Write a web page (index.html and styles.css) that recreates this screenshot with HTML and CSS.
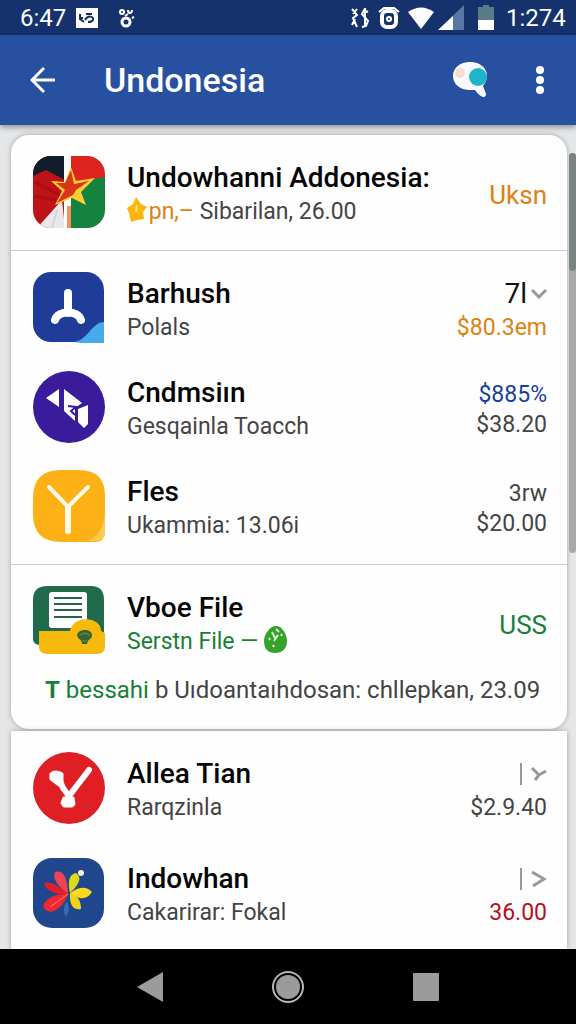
FILE: index.html
```html
<!DOCTYPE html>
<html lang="id">
  <head>
    <meta charset="UTF-8" />
    <meta name="viewport" content="width=device-width, initial-scale=1.0" />
    <title>Undonesia</title>
    <link rel="stylesheet" href="styles.css" />
  </head>
  <body>
    <div class="status-bar">
      <span class="clock">6:47</span>
      <svg width="22" height="20" viewBox="0 0 22 20">
        <path d="M0 0h22v20H0z" fill="#fff" />
        <path d="M4 6v5l4 3M4 10h3M10 6h6M9 12c3-5 9-4 8 0-1 2-3 2-5 2" fill="none" stroke="#15305f" stroke-width="2" />
      </svg>
      <svg class="dots" width="18" height="20" viewBox="0 0 18 20" fill="none" stroke="#fff" stroke-width="2">
        <circle cx="8" cy="14" r="4" stroke-width="3" />
        <circle cx="4" cy="4" r="2" />
        <path d="M7 8l3-2M10 2c0 4 4 4 4 0M14 10l2-1" />
      </svg>
      <div class="status-right">
        <svg width="20" height="22" viewBox="0 0 20 22" fill="none" stroke="#fff" stroke-width="2">
          <path d="M2 2l5 6-4 3 4 9M7 2L3 7M2 18l3-6M18 5l-4-2-2 4 6 7-2 5-4 1M15 1v19" />
        </svg>
        <svg width="22" height="22" viewBox="0 0 22 22" fill="none" stroke="#fff">
          <rect x="4" y="4" width="14" height="16" rx="5" stroke-width="4" />
          <circle cx="11" cy="12" r="2" stroke-width="2" />
          <path d="M1 5l5-4h10l5 4" stroke-width="2" />
        </svg>
        <svg width="26" height="22" viewBox="0 0 26 22">
          <path d="M0 5Q13-4 26 5L13 22z" fill="#fff" />
        </svg>
        <svg class="signal" width="26" height="25" viewBox="0 0 26 25">
          <path d="M0 25L26 0v25z" fill="#5a76a5" />
          <path d="M0 25L15 11v14z" fill="#fff" />
        </svg>
        <svg class="battery" width="16" height="25" viewBox="0 0 16 25">
          <path d="M0 2h5V0h6v2h5v23H0z" fill="#597b86" />
          <path d="M0 15h16v10H0z" fill="#fff" />
        </svg>
        <span class="clock">1:274</span>
      </div>
    </div>

    <header class="app-bar">
      <button type="button" class="icon-btn" aria-label="Back">
        <svg width="26" height="28" viewBox="0 0 26 28" fill="none" stroke="#fff" stroke-width="3">
          <path d="M14 2L2 14l12 12M2 14h23" />
        </svg>
      </button>
      <h1>Undonesia</h1>
      <button type="button" class="icon-btn" aria-label="Chat">
        <svg width="36" height="36" viewBox="0 0 36 36">
          <path d="M18 0C8 0 1 6 1 14s7 14 17 14h5c2 3 5 6 8 7 3 0 3-2 3-3l-3-8c2-3 4-6 4-10C35 6 28 0 18 0z" fill="#f8fafc" />
          <circle cx="8" cy="11" r="5" fill="#fbdcd5" />
          <circle cx="26" cy="15" r="9" fill="#20b4cb" />
        </svg>
      </button>
      <button type="button" class="icon-btn more" aria-label="More">
        <svg width="8" height="28" viewBox="0 0 8 28" fill="#fff">
          <circle cx="4" cy="4" r="4" />
          <circle cx="4" cy="14" r="4" />
          <circle cx="4" cy="24" r="4" />
        </svg>
      </button>
    </header>

    <main>
      <div class="card">
        <ul class="group">
          <li class="row">
            <svg class="logo" viewBox="0 0 72 72">
              <clipPath id="tile"><rect width="72" height="72" rx="18" /></clipPath>
              <g clip-path="url(#tile)">
                <path d="M0 0h32v72H0z" fill="#c01219" />
                <path d="M0 0h32v24L13 14 0 20z" fill="#131c2a" />
                <path d="M2 26l26 14M1 40l22 4" stroke="#a80f17" stroke-width="3" />
                <path d="M4 72L29 44l3 28z" fill="#e9e9ed" />
                <path d="M24 54l-5 18" stroke="#d3d4db" stroke-width="2" />
                <path d="M31 0h8v72h-8z" fill="#fff" />
                <path d="M34 50h5v22h-5z" fill="#f2925a" />
                <path d="M38 0h34v25l-34 3z" fill="#dd241f" />
                <path d="M38 27l34-6v51H38z" fill="#15833f" />
                <path d="M38 11l5 14 19-3-14 14 5 13-14-7-17 7 7-14-11-10 14 1z" fill="#ffce32" />
                <path d="M38 14l3 14 15-3-13 9-3 5-16 8 8-13-9-7 9 0z" fill="#d93618" />
              </g>
            </svg>
            <div class="info">
              <h2>Undowhanni Addonesia:</h2>
              <p>
                <svg class="inline-icon" width="20" height="26" viewBox="0 0 20 26">
                  <path d="M9 0l5 7 6 3-4 5 1 7-7 1-6 2-2-9-2-5 6-4z" fill="#fbb50d" />
                  <path d="M10 8l-1 7" fill="none" stroke="#ffe675" stroke-width="2" />
                </svg>
                <span class="orange">pn,–</span> Sibarilan, 26.00
              </p>
            </div>
            <div class="value big orange">Uksn</div>
          </li>
        </ul>

        <ul class="group">
          <li class="row">
            <svg class="logo" viewBox="0 0 72 72">
              <rect width="71" height="70" rx="18" fill="#1e3c98" />
              <path d="M41 70c13-1 18-20 30-20v21H47z" fill="#48a9ed" />
              <path d="M35 21v20M22 48c3-10 23-10 26 0" fill="none" stroke="#fff" stroke-width="8" stroke-linecap="round" />
            </svg>
            <div class="info">
              <h2>Barhush</h2>
              <p>Polals</p>
            </div>
            <div class="value">
              <div class="strong">7l<svg class="chevron" width="16" height="10" viewBox="0 0 16 10"><path d="M1 1l7 7 7-7" /></svg></div>
              <div class="orange">$80.3em</div>
            </div>
          </li>
          <li class="row">
            <svg class="logo" viewBox="0 0 72 72">
              <circle cx="36" cy="36" r="36" fill="#3a1b9b" />
              <path d="M26 18v18L13 27zM31 18l18 14-7 5v13L31 40zM45 38l10-4v19l-4 4-6-6z" fill="#fff" />
              <path d="M35 35l8 1-5 4 4 4" fill="none" stroke="#3a1b9b" stroke-width="2" />
            </svg>
            <div class="info">
              <h2>Cndmsiın</h2>
              <p>Gesqainla Toacch</p>
            </div>
            <div class="value tight">
              <div class="blue">$885%</div>
              <div>$38.20</div>
            </div>
          </li>
          <li class="row">
            <svg class="logo" viewBox="0 0 72 72">
              <path d="M28 0h18q26 0 26 26v36q0 10-10 10H28Q0 72 0 44V28Q0 0 28 0z" fill="#fdb116" />
              <path d="M72 42q-1 23-18 29h10q8 0 8-9z" fill="#ffca50" />
              <path d="M16 17l19 20 20-20" fill="none" stroke="#fffbe8" stroke-width="4" stroke-linecap="round" />
              <path d="M35 38v23" fill="none" stroke="#fffbe8" stroke-width="6" stroke-linecap="round" />
            </svg>
            <div class="info">
              <h2>Fles</h2>
              <p>Ukammia: 13.06i</p>
            </div>
            <div class="value tight">
              <div>3rw</div>
              <div>$20.00</div>
            </div>
          </li>
        </ul>

        <ul class="group">
          <li class="row">
            <svg class="logo" viewBox="0 0 72 72">
              <path d="M14 0h44q13 0 13 14v45H6q-6-1-6-6V14Q0 0 14 0z" fill="#206b4c" />
              <rect x="16" y="6" width="38" height="36" rx="3" fill="#fff" />
              <path d="M21 12h28M21 18h28M21 24h28M21 31h28" stroke="#28614d" stroke-width="2" />
              <path d="M6 45h31c3-16 31-15 31 0l4 2v13q0 8-8 8H14q-8 0-8-8z" fill="#f8b90d" />
              <path d="M44 49c2-7 15-6 15 0 0 5-4 3-5 9h-5c0-5-4-4-5-9z" fill="#356536" />
              <path d="M47 49l5-2 5 2M49 55h5" stroke="#8a922a" stroke-width="1" fill="none" />
            </svg>
            <div class="info">
              <h2>Vboe File</h2>
              <p class="green">
                Serstn File —
                <svg class="inline-icon" width="23" height="27" viewBox="0 0 23 27">
                  <path d="M12 0c6 0 11 8 11 15 0 8-5 12-12 12S0 23 0 15C0 8 6 0 12 0z" fill="#35a22c" />
                  <path d="M12 3l3 3M8 6l3 6M14 9l-4 6M5 12l1 2M17 8l1 2M9 19l1 2" fill="none" stroke="#dcf5d2" stroke-width="2" />
                </svg>
              </p>
            </div>
            <div class="value big green">USS</div>
          </li>
          <li class="note"><span class="green"><b>T</b> bessahi</span> b Uıdoantaıhdosan: chllepkan, 23.09</li>
        </ul>
      </div>

      <div class="card second">
        <ul class="group">
          <li class="row">
            <svg class="logo" viewBox="0 0 72 72">
              <circle cx="36" cy="36" r="36" fill="#df1f23" />
              <path d="M26 27l4 9 6 8 20-26" fill="none" stroke="#fff" stroke-width="6" stroke-linecap="round" stroke-linejoin="round" />
              <path d="M18 22c3-3 9-2 11 0v9l-3 2-8-6zM31 46h9l1 6-2 2h-8l-2-3z" fill="#fff" stroke="#fff" stroke-width="3" stroke-linejoin="round" />
            </svg>
            <div class="info">
              <h2>Allea Tian</h2>
              <p>Rarqzinla</p>
            </div>
            <div class="value">
              <div class="marks"><svg width="28" height="24" viewBox="0 0 28 24"><path d="M2 1v22" stroke-width="2" /><path d="M13 6l7 7 7-4M20 13l-4 5" /></svg></div>
              <div>$2.9.40</div>
            </div>
          </li>
          <li class="row">
            <svg class="logo" viewBox="0 0 72 72">
              <rect width="71" height="70" y="1" rx="19" fill="#20468d" />
              <path d="M35 37Q18 24 22 15q12-4 13 22z" fill="#f04452" />
              <path d="M35 37Q14 38 11 26q9-3 24 11z" fill="#df202c" />
              <path d="M35 37Q30 52 18 55q-10-2-7-9 8-10 24-9z" fill="#ed2833" />
              <path d="M37 36q-4-18 6-20 9 6-6 20z" fill="#d9dc1b" />
              <path d="M37 36q14-10 22-1-8 12-22 1z" fill="#fcd91d" />
              <path d="M37 36q11 3 11 16-12 2-11-16z" fill="#efd416" />
              <path d="M34 44q-6 9-1 16 5-7 1-16z" fill="#356db5" />
              <path d="M17 50l18-13" fill="none" stroke="#f58b62" stroke-width="1" />
              <circle cx="48" cy="16" r="3" fill="#f7f3c8" />
            </svg>
            <div class="info">
              <h2>Indowhan</h2>
              <p>Cakarirar: Fokal</p>
            </div>
            <div class="value">
              <div class="marks"><svg width="28" height="24" viewBox="0 0 28 24"><path d="M2 1v22" stroke-width="2" /><path d="M13 5l12 7-11 7" /></svg></div>
              <div class="red">36.00</div>
            </div>
          </li>
        </ul>
      </div>
      <div class="scrollbar"><div class="thumb"></div></div>
    </main>

    <nav class="nav-bar">
      <button type="button" class="icon-btn" aria-label="Back">
        <svg width="26" height="30" viewBox="0 0 26 30"><path d="M26 0v30L0 15z" fill="#9b9b9b" /></svg>
      </button>
      <button type="button" class="icon-btn" aria-label="Home">
        <svg width="32" height="32" viewBox="0 0 32 32">
          <circle cx="16" cy="16" r="15" fill="none" stroke="#b5b5b5" stroke-width="2" />
          <circle cx="16" cy="16" r="12" fill="#9b9b9b" />
        </svg>
      </button>
      <button type="button" class="icon-btn" aria-label="Recent apps">
        <svg width="26" height="28" viewBox="0 0 26 28"><rect width="26" height="28" rx="1" fill="#9b9b9b" /></svg>
      </button>
    </nav>
  </body>
</html>
```

FILE: styles.css
```css
* {
  box-sizing: border-box;
}
body {
  margin: 0;
  min-height: 100vh;
  display: flex;
  flex-direction: column;
  font-family: Roboto, "Liberation Sans", sans-serif;
  background-color: #e5e6e8;
  color: #444;
}
h1,
h2,
p,
ul {
  margin: 0;
  padding: 0;
}
ul {
  list-style: none;
}
svg {
  flex: none;
}

/* status bar */
.status-bar {
  display: flex;
  align-items: center;
  height: 35px;
  padding: 0 10px 0 20px;
  background-color: #15326d;
  color: white;
}
.clock {
  width: 60px;
  font-size: 24px;
  line-height: 34px;
}
.status-bar > .clock {
  width: 56px;
}
.dots {
  margin-left: 20px;
}
.status-right {
  display: flex;
  align-items: center;
  gap: 8px;
  margin-left: auto;
}
.signal {
  margin-left: -4px;
}
.battery {
  margin: 0 4px 0 6px;
}

/* app bar */
.app-bar {
  position: relative;
  display: flex;
  align-items: center;
  height: 90px;
  padding: 0 32px 0 30px;
  background-color: #2850a0;
  box-shadow: 0 2px 6px rgba(0, 0, 0, 0.4);
}
.app-bar h1 {
  flex: 1;
  margin-left: 48px;
  font-size: 34px;
  font-weight: 500;
  line-height: 40px;
  color: white;
}
.icon-btn {
  display: flex;
  padding: 0;
  border: none;
  background: none;
}
.more {
  margin-left: 48px;
}

/* lists */
main {
  position: relative;
  flex: 1;
  padding: 10px 9px 0 11px;
}
.card {
  background-color: #fefefe;
  border-radius: 18px;
  box-shadow: 0 0 5px rgba(0, 0, 0, 0.3);
}
.second {
  margin-top: 2px;
  border-radius: 0;
}
.group {
  display: flex;
  flex-direction: column;
  gap: 27px;
  padding: 21px 20px 22px 22px;
}
.group + .group {
  border-top: 1px solid #ccc;
}
.second .group {
  gap: 33px;
  padding-bottom: 20px;
}
.row {
  display: flex;
  align-items: center;
  height: 72px;
}
.logo {
  width: 72px;
  height: 72px;
  margin-right: 22px;
}
.info {
  flex: 1;
  padding-top: 6px;
  white-space: nowrap;
}
.info h2 {
  font-size: 28px;
  font-weight: 500;
  line-height: 34px;
  color: #050505;
}
.info p {
  font-size: 23px;
  line-height: 34px;
}
.inline-icon {
  margin-right: -4px;
  vertical-align: -4px;
}
.value {
  padding-top: 6px;
  font-size: 23px;
  line-height: 34px;
  text-align: right;
}
.tight {
  line-height: 30px;
}
.big {
  font-size: 26px;
}
.strong {
  font-size: 28px;
  color: #111;
}
.chevron,
.marks svg {
  fill: none;
  stroke: #999;
  stroke-width: 3;
}
.chevron {
  margin-left: 4px;
  vertical-align: 4px;
}
.marks svg {
  display: block;
  margin: 5px 0 5px auto;
}
.note {
  margin-top: -12px;
  padding-left: 12px;
  font-size: 24px;
  line-height: 34px;
  white-space: nowrap;
}
.orange {
  color: #dc8210;
}
.blue {
  color: #1a429a;
}
.green {
  color: #188035;
}
.red {
  color: #b3121f;
}

/* scroll track over the right edge */
.scrollbar {
  position: absolute;
  top: 28px;
  right: 0;
  width: 7px;
  height: 400px;
  border-radius: 4px;
  background-color: #a9a9a9;
}
.thumb {
  height: 118px;
  border-radius: 4px;
  background-color: #7b8284;
}

/* system navigation */
.nav-bar {
  position: relative;
  display: flex;
  align-items: center;
  justify-content: center;
  gap: 109px;
  height: 75px;
  background-color: black;
}
```
